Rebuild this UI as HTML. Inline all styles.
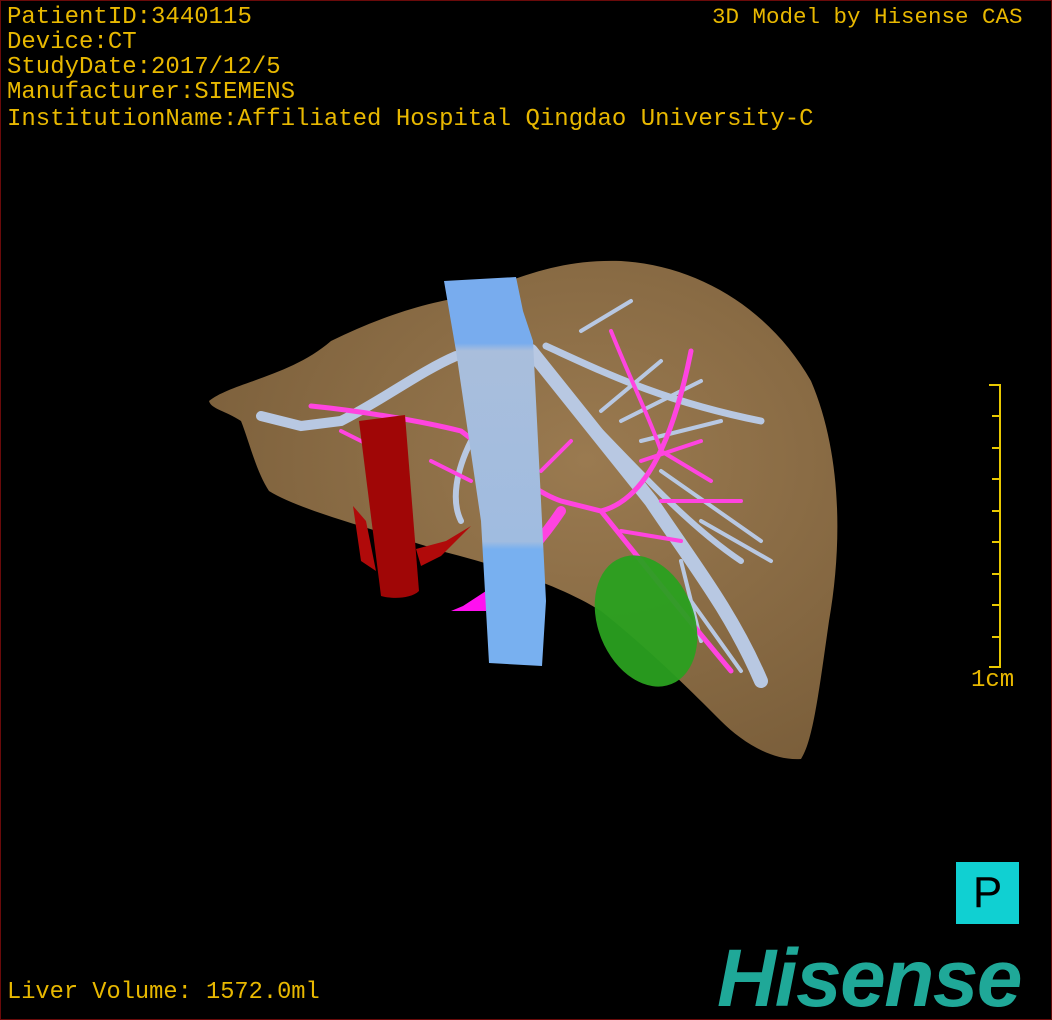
<!DOCTYPE html>
<html><head><meta charset="utf-8"><style>
html,body{margin:0;padding:0;background:#000;}
#f{position:relative;width:1050px;height:1018px;border:1px solid #6a0a0a;overflow:hidden;background:#000;}
.t{position:absolute;left:6px;color:#e8b800;font-family:"Liberation Mono","Noto Sans CJK SC",monospace;font-size:24px;white-space:nowrap;line-height:25px;}
svg{position:absolute;left:0;top:0;}
</style></head><body><div id="f">
<svg width="1052" height="1020" viewBox="0 0 1052 1020">
<defs>
<radialGradient id="lg" cx="0.6" cy="0.4" r="0.7"><stop offset="0" stop-color="#9a7a50"/><stop offset="1" stop-color="#7a5e3a"/></radialGradient>
<linearGradient id="bg" x1="0" y1="0" x2="0" y2="1"><stop offset="0" stop-color="#78acee"/><stop offset="0.17" stop-color="#78acee"/><stop offset="0.19" stop-color="#a9bedc"/><stop offset="0.68" stop-color="#a0bce0"/><stop offset="0.7" stop-color="#78b0f0"/><stop offset="1" stop-color="#78b0f0"/></linearGradient>
</defs>
<path d="M208,400 C230,382 290,375 330,340 C380,315 430,300 470,295 C520,275 560,258 620,260 C700,265 770,310 810,380 C840,450 842,540 828,620 C818,690 812,740 800,758 C770,760 740,740 720,720 C690,690 650,650 600,610 C560,585 500,565 440,550 C380,530 300,510 268,490 C255,470 248,440 240,420 C225,410 210,408 208,400Z" fill="url(#lg)"/>
<g fill="none" stroke="#b8c8e2" stroke-linecap="round">
<path d="M455,355 C420,370 380,400 340,420 L300,425 L260,415" stroke-width="10"/>
<path d="M530,350 C570,400 610,450 650,500 C690,560 730,610 760,680" stroke-width="14"/>
<path d="M545,345 C600,370 660,400 760,420" stroke-width="7"/>
<path d="M560,390 C620,450 680,520 740,560" stroke-width="6"/>
<path d="M470,440 C455,470 450,500 460,520" stroke-width="6"/>
<path d="M580,330 L630,300 M600,410 L660,360 M640,440 L720,420 M660,470 L760,540 M680,560 L700,640 M700,520 L770,560 M620,420 L700,380 M690,600 L740,670" stroke-width="4"/>
</g>
<g fill="none" stroke="#ff44e0" stroke-linecap="round">
<path d="M310,405 C360,410 420,420 460,430 C500,460 530,490 560,500 L600,510 C640,500 670,450 690,350" stroke-width="5"/>
<path d="M560,510 C540,540 520,560 500,580" stroke-width="10"/>
<path d="M600,510 C640,560 680,610 730,670" stroke-width="5"/>
<path d="M610,330 C630,380 650,420 660,450 L710,480 M640,460 L700,440 M430,460 L470,480 M540,470 L570,440 M340,430 L380,450 M620,530 L680,540 M660,500 L740,500" stroke-width="4"/>
</g>
<path d="M462,605 L485,590 L485,610 L450,610Z" fill="#ff10f0"/>
<ellipse cx="645" cy="620" rx="48" ry="68" transform="rotate(-22 645 620)" fill="#2aa020" opacity="0.95"/>
<path d="M358,420 L404,414 L418,590 C410,598 390,598 380,595 Z" fill="#a00606"/>
<path d="M352,505 L365,520 L375,570 L360,560 Z M415,548 L445,540 L470,525 L440,555 L420,565Z" fill="#b00a0a"/>
<path d="M443,280 L515,276 L522,310 L532,340 L545,600 L541,665 L488,662 L480,520 L455,350 Z" fill="url(#bg)"/>
<g stroke="#e8c800" stroke-width="2" fill="none">
<path d="M999,383 L999,667"/>
<path d="M988,384 L999,384 M991,415 L999,415 M991,447 L999,447 M991,478 L999,478 M991,510 L999,510 M991,541 L999,541 M991,573 L999,573 M991,604 L999,604 M991,636 L999,636 M988,666 L999,666"/>
</g>
</svg>
<div class="t" style="top:4px">PatientID:3440115</div>
<div class="t" style="top:29px">Device:CT</div>
<div class="t" style="top:54px">StudyDate:2017/12/5</div>
<div class="t" style="top:79px">Manufacturer:SIEMENS</div>
<div class="t" style="top:106px">InstitutionName:Affiliated Hospital Qingdao University-C</div>
<div class="t" style="top:4px;left:711px;font-size:22.5px">3D Model by Hisense CAS</div>
<div class="t" style="top:667px;left:970px">1cm</div>
<div class="t" style="top:979px;font-size:23.7px">Liver Volume: 1572.0ml</div>
<div style="position:absolute;left:955px;top:861px;width:63px;height:62px;background:#10d0d2;color:#000;font-family:'Liberation Sans',sans-serif;font-size:44px;text-align:center;line-height:62px;">P</div>
<div style="position:absolute;left:716px;top:928px;color:#1fa898;font-family:'Liberation Sans',sans-serif;font-weight:bold;font-style:italic;font-size:82px;letter-spacing:-1.5px;line-height:100px;">Hisense</div>
</div></body></html>
